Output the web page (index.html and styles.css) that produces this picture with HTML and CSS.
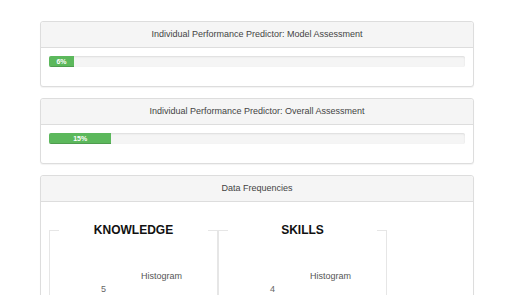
FILE: index.html
```html
<!DOCTYPE html>
<html>
<head>
<meta charset="utf-8">
<link rel="stylesheet" href="styles.css">
</head>
<body>
<div class="page">
  <div class="panel">
    <div class="panel-heading">Individual Performance Predictor: Model Assessment</div>
    <div class="panel-body">
      <div class="progress"><div class="bar" style="width:6%">6%</div></div>
    </div>
  </div>
  <div class="panel">
    <div class="panel-heading">Individual Performance Predictor: Overall Assessment</div>
    <div class="panel-body">
      <div class="progress"><div class="bar" style="width:15%">15%</div></div>
    </div>
  </div>
  <div class="panel">
    <div class="panel-heading">Data Frequencies</div>
    <div class="panel-body freq-body">
      <div class="freq">
        <fieldset class="box">
          <legend>KNOWLEDGE</legend>
          <div class="chart">
            <div></div><div class="chart-title">Histogram</div>
            <div class="axis">5</div><div></div>
          </div>
        </fieldset>
        <fieldset class="box">
          <legend>SKILLS</legend>
          <div class="chart">
            <div></div><div class="chart-title">Histogram</div>
            <div class="axis">4</div><div></div>
          </div>
        </fieldset>
      </div>
    </div>
  </div>
</div>
</body>
</html>
```
FILE: styles.css
```css
html, body {
  margin: 0;
  padding: 0;
  overflow: hidden;
  background: #fff;
  font-family: "Liberation Sans", Arial, sans-serif;
  color: #333;
}
.page {
  padding: 21px 38px 0 40px;
}
.panel {
  border: 1px solid #ddd;
  border-radius: 3px;
  margin-bottom: 11px;
  background: #fff;
  box-shadow: 0 1px 1px rgba(0,0,0,0.05);
}
.panel-heading {
  background: #f5f5f5;
  border-bottom: 1px solid #ddd;
  border-radius: 3px 3px 0 0;
  height: 25px;
  line-height: 25px;
  text-align: center;
  font-size: 9px;
  color: #444;
}
.panel-body {
  padding: 8px 8px 8px 8px;
}
.progress {
  height: 11px;
  margin-bottom: 11px;
  background: #f5f5f5;
  border-radius: 2px;
  box-shadow: inset 0 1px 2px rgba(0,0,0,0.1);
  overflow: hidden;
}
.bar {
  height: 11px;
  line-height: 11px;
  background: #5cb85c;
  color: #fff;
  font-size: 7px;
  font-weight: bold;
  text-align: center;
  box-shadow: inset 0 -1px 0 rgba(0,0,0,0.15);
}
.freq-body {
  padding-top: 21px;
  height: 300px;
}
.freq {
  display: flex;
}
.box {
  box-sizing: border-box;
  width: 169px;
  margin: 0;
  padding: 0;
  min-width: 0;
  border: 1px solid #e6e6e6;
}
.box legend {
  width: 149px;
  margin: 0 auto;
  padding: 0;
  text-align: center;
  font-size: 12px;
  line-height: 14px;
  font-weight: bold;
  color: #111;
}
.chart {
  display: grid;
  grid-template-columns: 56px 1fr;
  grid-template-rows: 11px 11px;
  row-gap: 2px;
  padding-top: 34px;
  height: 200px;
  font-size: 9px;
  line-height: 11px;
}
.chart-title {
  text-align: center;
  color: #555;
}
.axis {
  text-align: right;
  color: #666;
}
```
